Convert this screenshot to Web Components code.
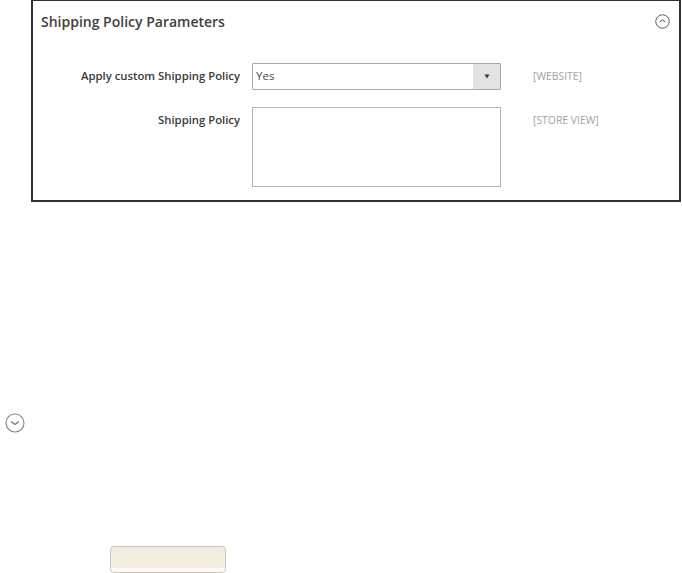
<!DOCTYPE html>
<html>
<head>
<meta charset="utf-8">
<style>
  html, body { margin: 0; background: #fff; }
  body { font-family: "Open Sans", sans-serif; width: 682px; height: 573px; overflow: hidden; }
  .lower { display: flex; flex-direction: column; align-items: flex-start; padding: 211px 0 0 5px; }
  .lower plain-button { margin: 113px 0 0 105px; }
</style>
</head>
<body>
<policy-panel title-text="Shipping Policy Parameters">
  <field-row label="Apply custom Shipping Policy" scope="[WEBSITE]"><select-box value="Yes"></select-box></field-row>
  <field-row label="Shipping Policy" scope="[STORE VIEW]"><text-box></text-box></field-row>
</policy-panel>
<div class="lower">
  <circle-toggle dir="down"></circle-toggle>
  <plain-button></plain-button>
</div>

<script>
class CircleToggle extends HTMLElement {
    connectedCallback() {
        const root = this.attachShadow({ mode: 'open' });
        const up = this.getAttribute('dir') === 'up';
        const size = up ? 15 : 20;
        const chevron = up ? 'M6.2 10.6 L10 8 L13.8 10.6' : 'M6 8.6 L10 11.4 L14 8.6';
        root.innerHTML = `
            <style>
            :host { display: block; width: ${size}px; height: ${size}px; }
            svg { display: block; }
            </style>
            <svg width="${size}" height="${size}" viewBox="0 0 20 20" fill="none" stroke="${up ? '#4a4a48' : '#85817c'}">
                <circle cx="10" cy="10" r="9" stroke-width="${up ? 1.2 : 1.1}"/>
                <path d="${chevron}" stroke-width="1.3"/>
            </svg>`;
    }
}
customElements.define('circle-toggle', CircleToggle);

class SelectBox extends HTMLElement {
    connectedCallback() {
        const root = this.attachShadow({ mode: 'open' });
        root.innerHTML = `
            <style>
            :host { display: flex; width: 249px; height: 27px; box-sizing: border-box; border: 1px solid #a9a9a7; border-radius: 1px; font-size: 11.5px; color: #4a4a48; }
            .value { flex: 1; padding-left: 3px; line-height: 24px; }
            .arrow { width: 27px; background: #e3e3e3; display: flex; align-items: center; justify-content: center; }
            svg { display: block; }
            </style>
            <span class="value">${this.getAttribute('value')}</span>
            <span class="arrow"><svg width="6" height="5"><path d="M0.5 0.5 H5.5 L3 4.5 Z" fill="#41362f"/></svg></span>`;
    }
}
customElements.define('select-box', SelectBox);

class TextBox extends HTMLElement {
    connectedCallback() {
        const root = this.attachShadow({ mode: 'open' });
        root.innerHTML = `
            <style>
            :host { display: block; width: 249px; height: 80px; box-sizing: border-box; border: 1px solid #b4b4b2; background: #fff; }
            </style>`;
    }
}
customElements.define('text-box', TextBox);

class FieldRow extends HTMLElement {
    connectedCallback() {
        const root = this.attachShadow({ mode: 'open' });
        root.innerHTML = `
            <style>
            :host { display: flex; align-items: flex-start; }
            .label { width: 199px; text-align: right; font-size: 11.3px; font-weight: 600; color: #3b3b39; line-height: 26px; white-space: nowrap; }
            .control { margin-left: 12px; }
            .scope { margin-left: 32px; font-size: 10.4px; color: #a3a3a1; line-height: 27px; white-space: nowrap; }
            </style>
            <span class="label">${this.getAttribute('label')}</span>
            <span class="control"><slot></slot></span>
            <span class="scope">${this.getAttribute('scope')}</span>`;
    }
}
customElements.define('field-row', FieldRow);

class PolicyPanel extends HTMLElement {
    connectedCallback() {
        const root = this.attachShadow({ mode: 'open' });
        root.innerHTML = `
            <style>
            :host { display: block; box-sizing: border-box; margin-left: 31px; width: 650px; height: 202px; border: 2px solid #33322e; border-top-width: 1px; padding: 0 9px 0 8px; }
            .head { display: flex; justify-content: space-between; align-items: center; height: 41px; }
            h2 { margin: 0; font-size: 14px; font-weight: 600; color: #41403d; }
            .rows { display: grid; gap: 17px; margin-top: 21px; }
            </style>
            <div class="head"><h2>${this.getAttribute('title-text')}</h2><circle-toggle dir="up"></circle-toggle></div>
            <div class="rows"><slot></slot></div>`;
    }
}
customElements.define('policy-panel', PolicyPanel);

class PlainButton extends HTMLElement {
    connectedCallback() {
        const root = this.attachShadow({ mode: 'open' });
        root.innerHTML = `
            <style>
            :host { display: block; width: 116px; height: 27px; box-sizing: border-box; border: 1.5px solid #cdc6b6; border-radius: 4px; background: linear-gradient(#f3ecdf 0 21px, #fdfcf9 21px); }
            </style>`;
    }
}
customElements.define('plain-button', PlainButton);
</script>
</body>
</html>
